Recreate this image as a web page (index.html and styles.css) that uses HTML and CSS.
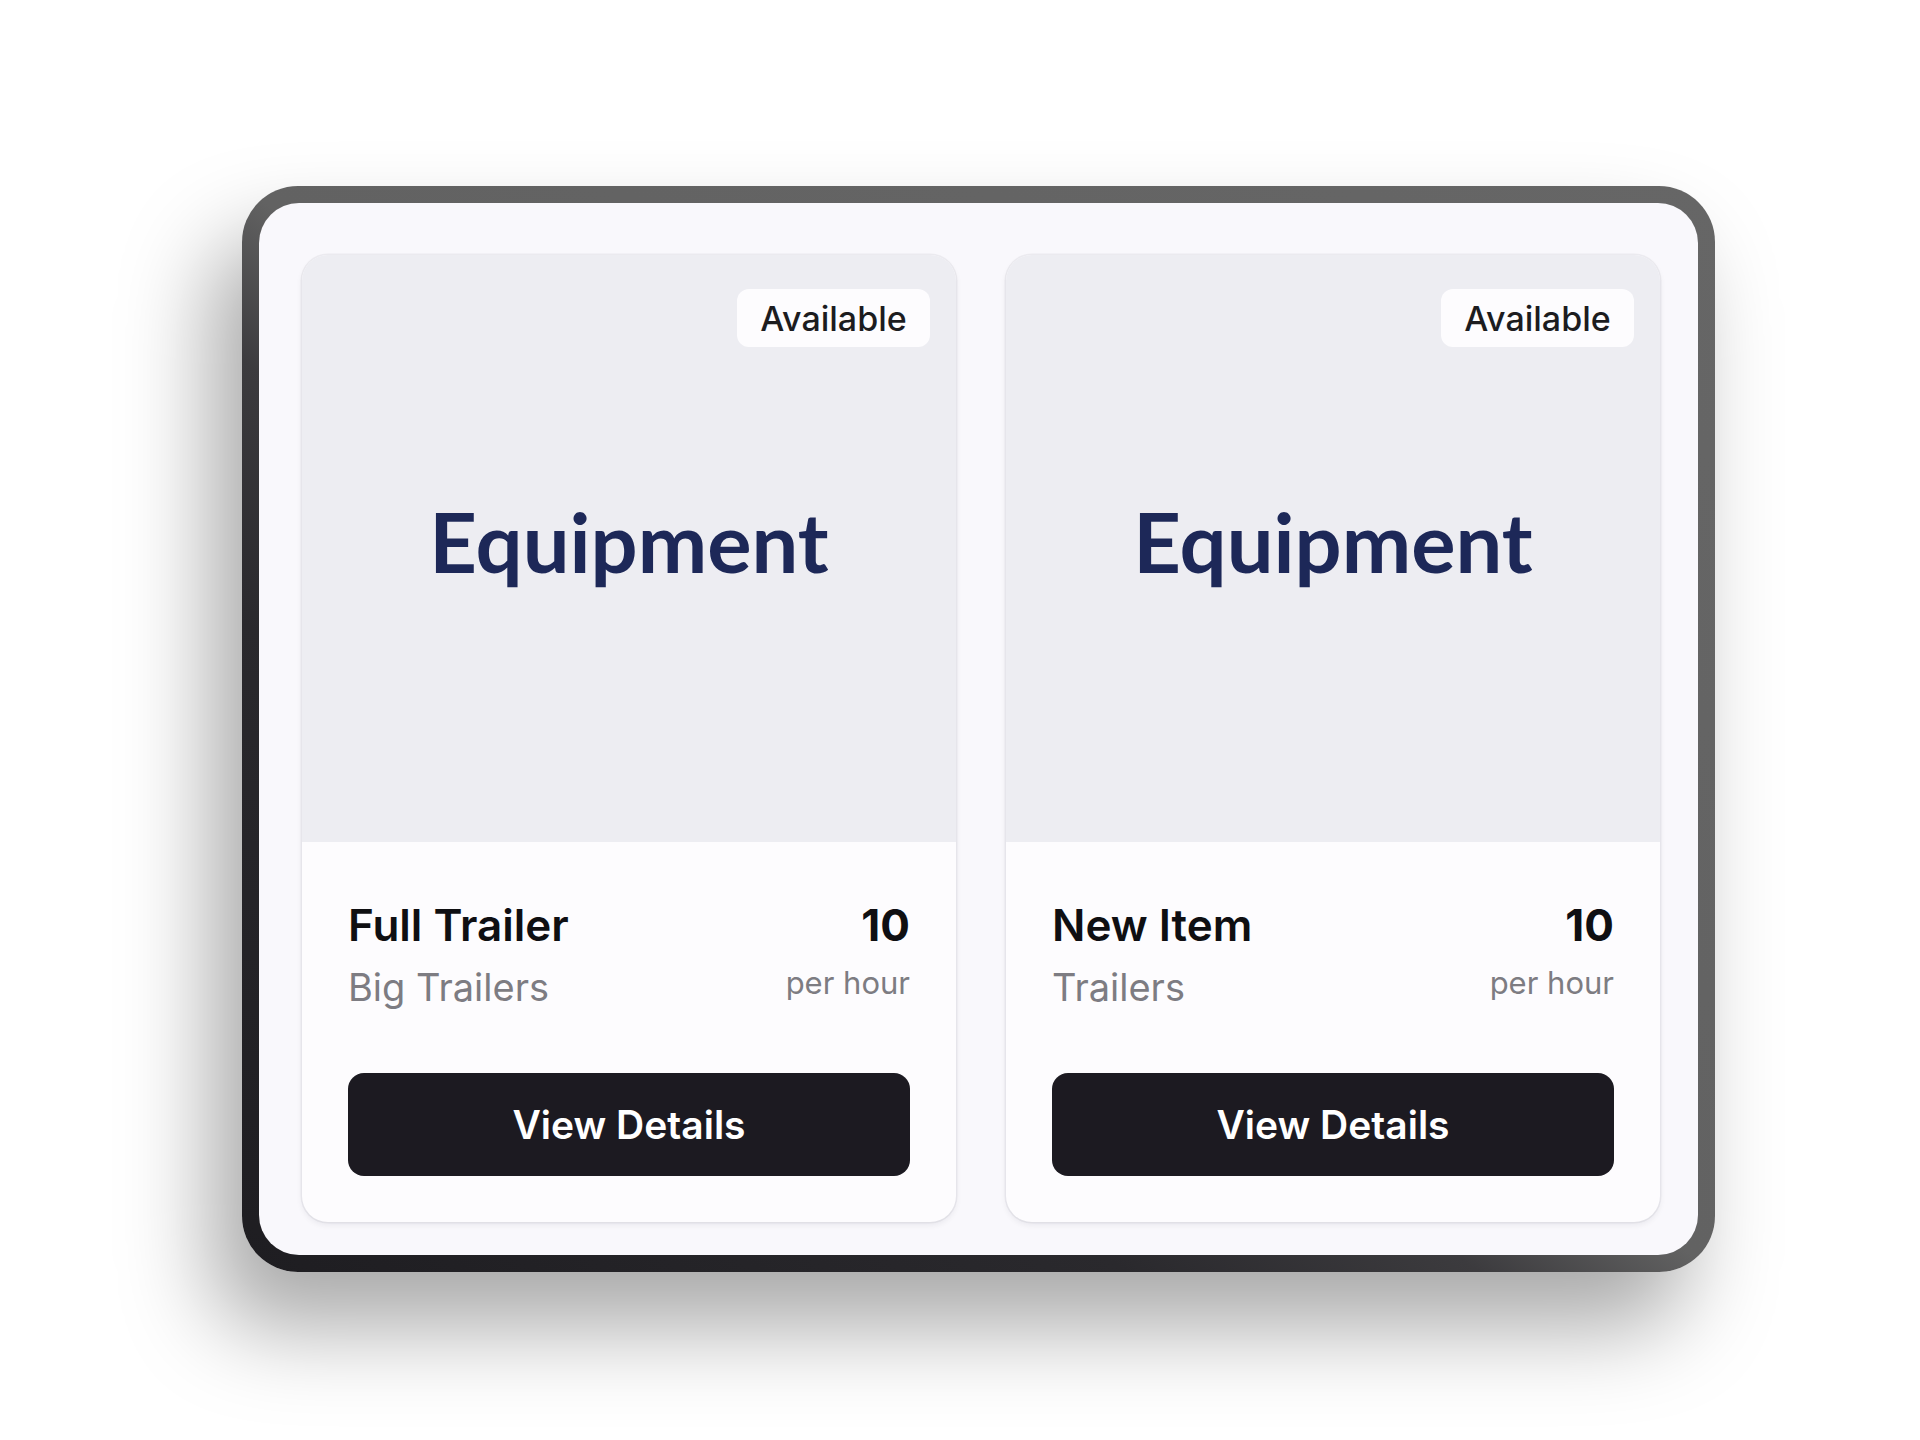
FILE: index.html
```html
<!DOCTYPE html>
<html lang="en">
<head>
<meta charset="utf-8">
<title>Equipment</title>
<link rel="stylesheet" href="styles.css">
</head>
<body>
<div class="page">
  <div class="frame">
    <div class="screen">
      <div class="card">
        <div class="media">
          <span class="badge">Available</span>
          <span class="media-title">Equipment</span>
        </div>
        <div class="body">
          <div class="info">
            <div class="names">
              <div class="name">Full Trailer</div>
              <div class="category">Big Trailers</div>
            </div>
            <div class="price">
              <div class="amount">10</div>
              <div class="unit">per hour</div>
            </div>
          </div>
          <button class="btn">View Details</button>
        </div>
      </div>
      <div class="card">
        <div class="media">
          <span class="badge">Available</span>
          <span class="media-title">Equipment</span>
        </div>
        <div class="body">
          <div class="info">
            <div class="names">
              <div class="name">New Item</div>
              <div class="category">Trailers</div>
            </div>
            <div class="price">
              <div class="amount">10</div>
              <div class="unit">per hour</div>
            </div>
          </div>
          <button class="btn">View Details</button>
        </div>
      </div>
    </div>
  </div>
</div>
</body>
</html>
```
FILE: styles.css
```css
html, body {
  margin: 0;
  padding: 0;
  background: #ffffff;
}
body {
  font-family: Inter, "Noto Sans", "Liberation Sans", sans-serif;
  width: 1920px;
  height: 1440px;
  overflow: hidden;
}
.page {
  padding: 186px 0 0 242px;
}
.frame {
  width: 1473px;
  height: 1086px;
  box-sizing: border-box;
  padding: 17px;
  border-radius: 56px;
  background: linear-gradient(to top right, #1e1d21 0%, #2a292d 30%, #3c3b3e 42%, #626262 50%, #666666 100%);
  box-shadow: -30px 55px 90px rgba(0, 0, 0, 0.34);
}
.screen {
  height: 100%;
  box-sizing: border-box;
  border-radius: 40px;
  background: #f9f8fc;
  padding: 52px 38px 34px 43px;
  display: flex;
  gap: 50px;
  align-items: flex-start;
}
.card {
  width: 654px;
  height: 967px;
  border-radius: 26px;
  overflow: hidden;
  background: #fdfcfe;
  box-shadow: 0 0 0 1.5px rgba(20, 20, 40, 0.05), 0 3px 6px rgba(20, 20, 40, 0.07);
  display: flex;
  flex-direction: column;
}
.media {
  position: relative;
  height: 587px;
  background: #ededf2;
  display: flex;
  align-items: center;
  justify-content: center;
  box-sizing: border-box;
  padding-bottom: 14px;
}
.badge {
  position: absolute;
  top: 34px;
  right: 26px;
  width: 193px;
  height: 58px;
  box-sizing: border-box;
  border-radius: 12px;
  background: #fdfcfe;
  color: #1c1c1f;
  font-size: 34px;
  font-weight: 500;
  display: flex;
  align-items: center;
  justify-content: center;
}
.media-title {
  font-family: Lato, "Noto Sans", sans-serif;
  font-weight: 700;
  font-size: 83px;
  line-height: 1.2;
  color: #1d2858;
}
.body {
  flex: 1;
  padding: 57px 46px 46px 46px;
  display: flex;
  flex-direction: column;
}
.info {
  display: flex;
  justify-content: space-between;
}
.name {
  font-size: 44px;
  font-weight: 600;
  line-height: 1.2;
  color: #0f0f12;
}
.category {
  margin-top: 13px;
  font-size: 38px;
  line-height: 1.2;
  color: #7d7c82;
}
.price {
  text-align: right;
}
.amount {
  font-size: 44px;
  font-weight: 700;
  line-height: 1.2;
  color: #0f0f12;
}
.unit {
  margin-top: 12px;
  font-size: 31px;
  line-height: 1.2;
  color: #7d7c82;
}
.btn {
  margin-top: auto;
  height: 103px;
  width: 100%;
  border: none;
  border-radius: 16px;
  background: #1c1a21;
  color: #ffffff;
  font-family: Inter, "Noto Sans", sans-serif;
  font-size: 39px;
  font-weight: 600;
  cursor: pointer;
}
```
